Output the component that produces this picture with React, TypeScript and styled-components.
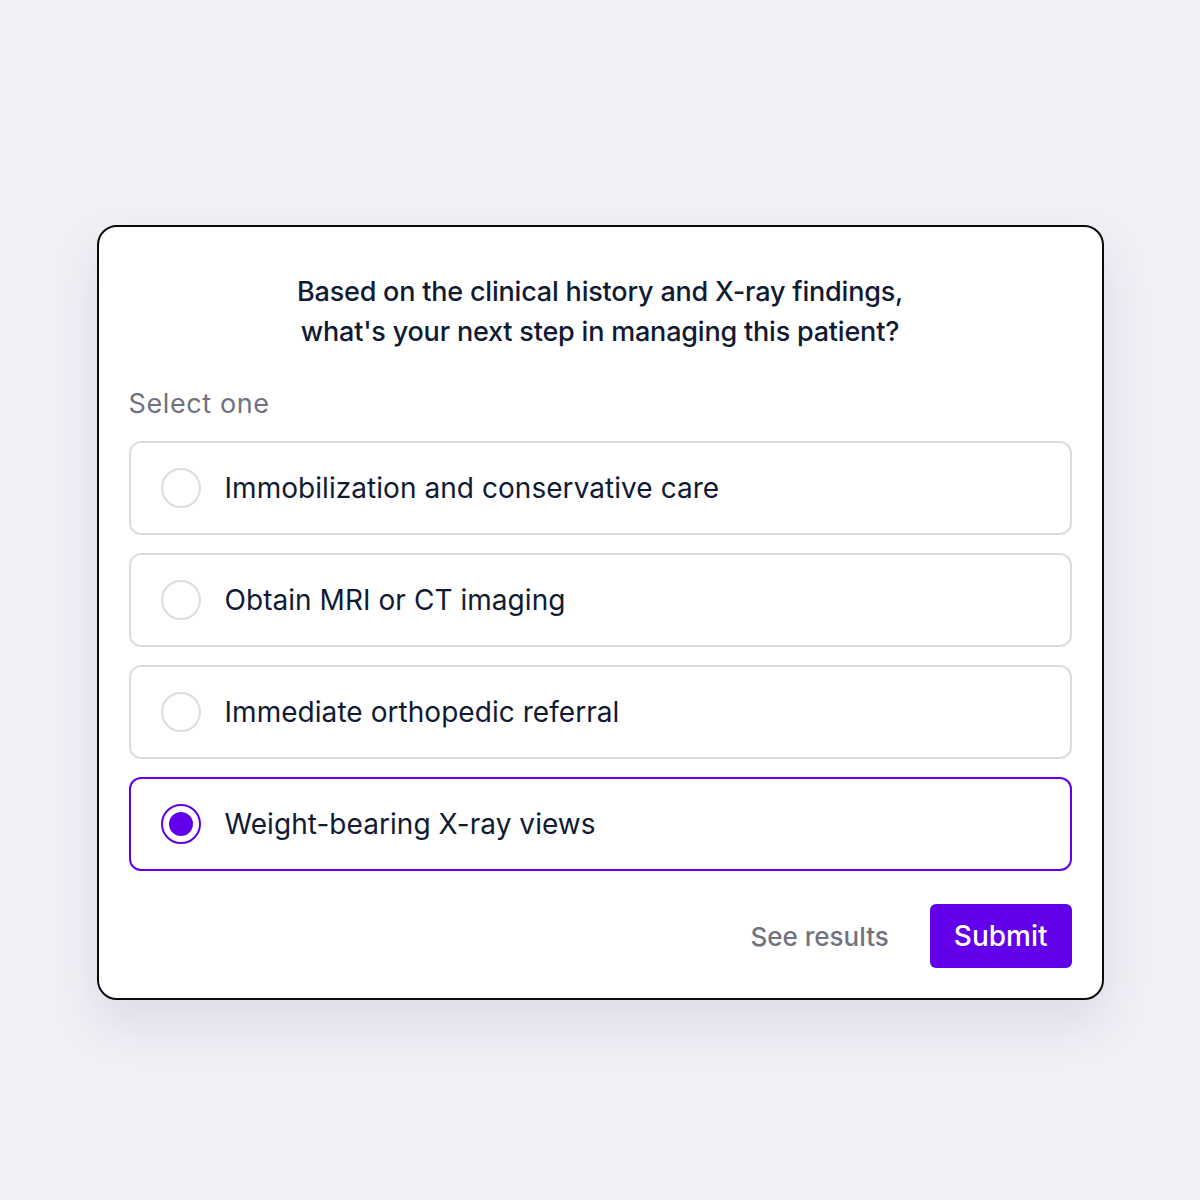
import React, { useState } from "react";
import styled, { createGlobalStyle, css } from "styled-components";

const Global = createGlobalStyle`
  html, body { margin: 0; padding: 0; background: #f0f0f6; }
  body { font-family: "Inter", "Liberation Sans", sans-serif; }
  * { box-sizing: border-box; }
`;

const Page = styled.div`
  width: 1200px;
  height: 1200px;
  display: flex;
  align-items: flex-start;
  justify-content: center;
  padding-top: 225px;
  background: #f0f0f6;
`;

const Card = styled.div`
  width: 1007px;
  background: #ffffff;
  border: 2px solid #0b0b0f;
  border-radius: 20px;
  box-shadow: 0 24px 48px rgba(60, 50, 120, 0.10);
  padding: 45px 30px 30px;
  display: flex;
  flex-direction: column;
`;

const Title = styled.h1`
  margin: 0;
  text-align: center;
  font-size: 27px;
  line-height: 40px;
  font-weight: 500;
  color: #111a33;
  letter-spacing: -0.2px;
`;

const Hint = styled.div`
  margin-top: 34px;
  font-size: 27px;
  line-height: 36px;
  color: #71717f;
  letter-spacing: 0.6px;
`;

const Options = styled.div`
  margin-top: 19px;
  display: flex;
  flex-direction: column;
  gap: 18px;
`;

const Option = styled.button<{ $selected: boolean }>`
  all: unset;
  box-sizing: border-box;
  cursor: pointer;
  height: 94px;
  border-radius: 12px;
  border: 2px solid ${(p) => (p.$selected ? "#6200ea" : "#dcdce0")};
  display: flex;
  align-items: center;
  padding-left: 30px;
  gap: 24px;
  font-family: "Inter", "Liberation Sans", sans-serif;
`;

const Radio = styled.span<{ $selected: boolean }>`
  width: 40px;
  height: 40px;
  border-radius: 50%;
  border: 2px solid ${(p) => (p.$selected ? "#6200ea" : "#dcdce0")};
  display: flex;
  align-items: center;
  justify-content: center;
  flex-shrink: 0;
  ${(p) =>
    p.$selected &&
    css`
      &::after {
        content: "";
        width: 24px;
        height: 24px;
        border-radius: 50%;
        background: #6200ea;
      }
    `}
`;

const Label = styled.span`
  font-size: 28px;
  line-height: 36px;
  color: #111a33;
  letter-spacing: 0.05px;
`;

const Footer = styled.div`
  margin-top: 33px;
  display: flex;
  justify-content: flex-end;
  align-items: center;
  gap: 41px;
`;

const LinkButton = styled.button`
  all: unset;
  cursor: pointer;
  font-family: "Inter", "Liberation Sans", sans-serif;
  font-size: 26px;
  font-weight: 500;
  color: #71717f;
`;

const Submit = styled.button`
  all: unset;
  box-sizing: border-box;
  cursor: pointer;
  height: 64px;
  padding: 0 24px;
  border-radius: 6px;
  background: #6200ea;
  color: #ffffff;
  font-family: "Inter", "Liberation Sans", sans-serif;
  font-size: 28px;
  font-weight: 500;
  display: flex;
  align-items: center;
`;

const choices = [
  "Immobilization and conservative care",
  "Obtain MRI or CT imaging",
  "Immediate orthopedic referral",
  "Weight-bearing X-ray views",
];

export default function App() {
  const [selected, setSelected] = useState(3);
  return (
    <Page>
      <Global />
      <Card>
        <Title>
          Based on the clinical history and X-ray findings,
          <br />
          what's your next step in managing this patient?
        </Title>
        <Hint>Select one</Hint>
        <Options>
          {choices.map((c, i) => (
            <Option key={c} $selected={selected === i} onClick={() => setSelected(i)}>
              <Radio $selected={selected === i} />
              <Label>{c}</Label>
            </Option>
          ))}
        </Options>
        <Footer>
          <LinkButton>See results</LinkButton>
          <Submit>Submit</Submit>
        </Footer>
      </Card>
    </Page>
  );
}
